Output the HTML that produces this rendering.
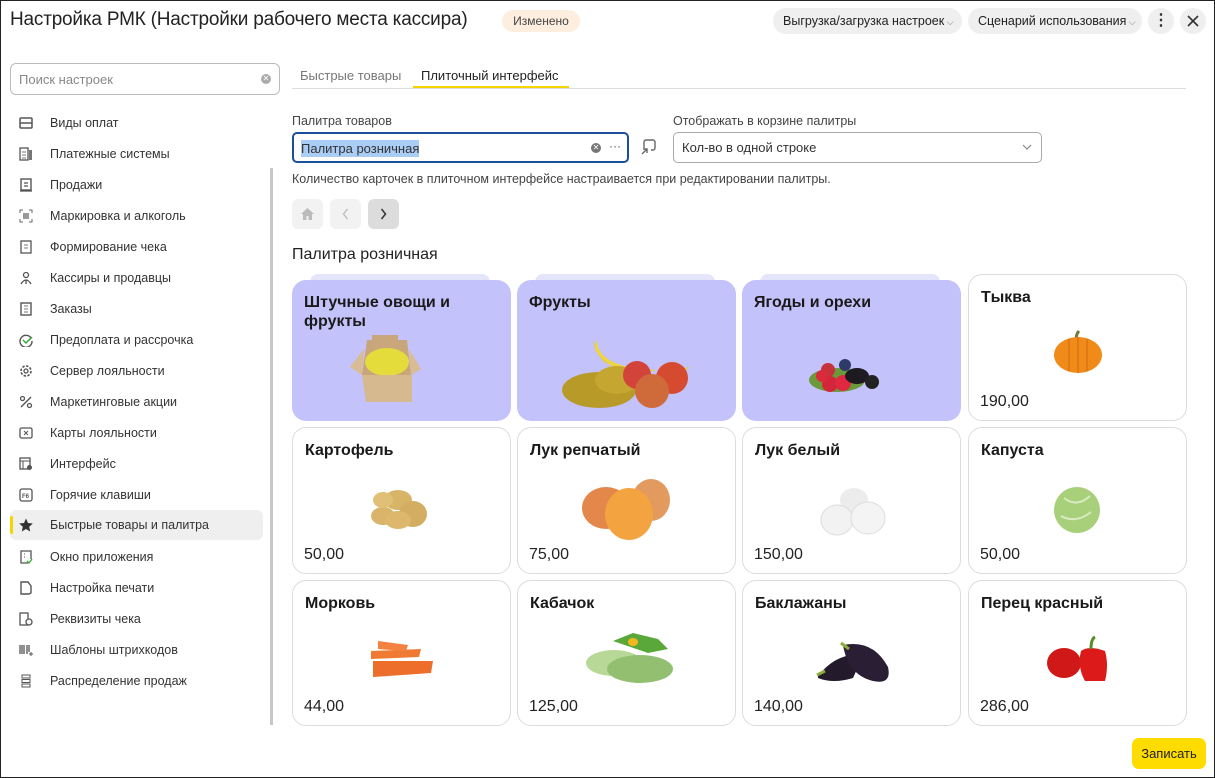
<!DOCTYPE html>
<html><head><meta charset="utf-8">
<style>
*{box-sizing:border-box;margin:0;padding:0}
body{width:1215px;height:778px;overflow:hidden;background:#fff;font-family:"Liberation Sans",Arial,sans-serif;color:#333;position:relative}
.frame{position:absolute;left:0;top:0;width:1215px;height:778px;border:1px solid #222;pointer-events:none;z-index:10}
.a{position:absolute}
.title{left:10px;top:9px;font-size:19px;letter-spacing:-0.2px;color:#222;white-space:nowrap}
.badge{left:502px;top:10px;width:78px;height:22px;border-radius:11px;background:#fdeee0;font-size:12px;color:#444;text-align:center;line-height:22px}
.pill{top:8px;height:26px;border-radius:13px;background:#efefef;font-size:12.5px;color:#222;line-height:26px;padding-left:10px;white-space:nowrap}
.circ{top:8px;width:26px;height:26px;border-radius:13px;background:#efefef;text-align:center;line-height:26px;font-size:16px;color:#333}
.search{left:10px;top:63px;width:270px;height:32px;border:1px solid #bbb;border-radius:6px;font-size:13px;color:#888;padding:8px 0 0 8px}
.clr{width:10px;height:10px;border-radius:5px;background:#aaa;color:#fff;font-size:8px;line-height:10px;text-align:center}
.nav{left:10px;width:253px;height:30px;font-size:12.5px;color:#333;line-height:30px;padding-left:40px}
.nav svg{position:absolute;left:9px;top:8px}
.sel{background:#efefef;border-radius:6px}
.tab{top:68px;font-size:13px}
.lbl{font-size:12.5px;color:#444}
.box{border:1px solid #aaa;border-radius:5px;height:31px;font-size:13px;color:#333;line-height:29px;padding-left:8px}
.sq{top:199px;width:31px;height:30px;border-radius:6px;background:#f2f2f2}
.card{width:219px;border-radius:14px;border:1px solid #dcdcdc;background:#fff;overflow:hidden}
.card.f{background:#c4c2fa;border:none}
.card .n{position:absolute;left:12px;top:13px;font-size:16px;font-weight:bold;color:#1a1a1a;line-height:19px}
.card .p{position:absolute;left:11px;bottom:9px;font-size:16px;color:#222}
.card svg{position:absolute;left:0;top:0}
.ftab{height:10px;width:180px;border-radius:8px 8px 0 0;background:#e4e4fb}
</style></head><body>
<div class="frame"></div>
<div class="a title">Настройка РМК (Настройки рабочего места кассира)</div>
<div class="a badge">Изменено</div>
<div class="a pill" style="left:773px;width:189px">Выгрузка/загрузка настроек<span style="font-size:9px;color:#777"> ⌵</span></div>
<div class="a pill" style="left:968px;width:174px">Сценарий использования<span style="font-size:9px;color:#777"> ⌵</span></div>
<div class="a circ" style="left:1148px;font-weight:bold">⋮</div>
<div class="a circ" style="left:1180px"><svg width="12" height="12" viewBox="0 0 12 12" style="margin-top:7px"><path d="M1 1L11 11M11 1L1 11" stroke="#333" stroke-width="1.6"/></svg></div>

<div class="a search">Поиск настроек</div>
<div class="a clr" style="left:261px;top:74px">✕</div>

<div class="a" style="left:270px;top:168px;width:3px;height:557px;background:#c8c8c8"></div>

<div class="a nav" style="top:108px"><svg width="14" height="14"><rect x="1" y="2" width="12" height="10" rx="1" fill="none" stroke="#555" stroke-width="1.5"/><path d="M1 7h12" stroke="#555" stroke-width="1.5"/></svg>Виды оплат</div>
<div class="a nav" style="top:139px"><svg width="14" height="14"><rect x="1" y="1" width="8" height="12" fill="none" stroke="#555" stroke-width="1.3"/><rect x="10" y="3" width="3" height="10" fill="#777"/><path d="M3 5h4M3 8h4M3 11h4" stroke="#777"/></svg>Платежные системы</div>
<div class="a nav" style="top:170px"><svg width="14" height="14"><rect x="2" y="1" width="10" height="11" fill="none" stroke="#555" stroke-width="1.4"/><path d="M1 13h12M5 5h4M5 8h4" stroke="#555" stroke-width="1.3"/></svg>Продажи</div>
<div class="a nav" style="top:201px"><svg width="14" height="14"><path d="M1 4V1h3M10 1h3v3M13 10v3h-3M4 13H1v-3" fill="none" stroke="#666"/><rect x="4" y="4" width="6" height="6" fill="#999"/></svg>Маркировка и алкоголь</div>
<div class="a nav" style="top:232px"><svg width="14" height="14"><rect x="2" y="1" width="10" height="12" fill="none" stroke="#555" stroke-width="1.3"/><path d="M5 5h4M5 8h4" stroke="#777"/></svg>Формирование чека</div>
<div class="a nav" style="top:263px"><svg width="14" height="14"><circle cx="7" cy="4" r="2.5" fill="none" stroke="#555" stroke-width="1.3"/><path d="M2 13Q7 5 12 13M7 9v4" fill="none" stroke="#555" stroke-width="1.3"/></svg>Кассиры и продавцы</div>
<div class="a nav" style="top:294px"><svg width="14" height="14"><rect x="2" y="1" width="10" height="12" fill="none" stroke="#555" stroke-width="1.4"/><path d="M5 4h4M5 7h4M5 10h4" stroke="#777"/></svg>Заказы</div>
<div class="a nav" style="top:325px"><svg width="14" height="14"><path d="M12 5A6 6 0 1 0 13 8" fill="none" stroke="#555" stroke-width="1.4"/><path d="M4 7l3 3 6-6" fill="none" stroke="#3a3" stroke-width="1.5"/></svg>Предоплата и рассрочка</div>
<div class="a nav" style="top:356px"><svg width="14" height="14"><circle cx="7" cy="7" r="5" fill="none" stroke="#555" stroke-width="1.6" stroke-dasharray="2.5 1.4"/><circle cx="7" cy="7" r="2" fill="none" stroke="#555" stroke-width="1.3"/></svg>Сервер лояльности</div>
<div class="a nav" style="top:387px"><svg width="14" height="14"><circle cx="3.5" cy="3.5" r="2" fill="none" stroke="#555" stroke-width="1.3"/><circle cx="10.5" cy="10.5" r="2" fill="none" stroke="#555" stroke-width="1.3"/><path d="M12 2L2 12" stroke="#555" stroke-width="1.4"/></svg>Маркетинговые акции</div>
<div class="a nav" style="top:418px"><svg width="14" height="14"><rect x="1" y="2" width="12" height="10" rx="1.5" fill="none" stroke="#555" stroke-width="1.3"/><path d="M5 5l4 4M9 5l-4 4" stroke="#555"/></svg>Карты лояльности</div>
<div class="a nav" style="top:449px"><svg width="14" height="14"><rect x="1" y="1" width="10" height="11" fill="none" stroke="#555" stroke-width="1.3"/><path d="M1 4h10M4 4v8" stroke="#555"/><circle cx="10.5" cy="10.5" r="2.5" fill="#555"/></svg>Интерфейс</div>
<div class="a nav" style="top:480px"><svg width="14" height="14"><rect x="1" y="1" width="12" height="12" rx="2" fill="none" stroke="#555" stroke-width="1.3"/><text x="3" y="10" font-size="6" font-family="Liberation Sans" font-weight="bold" fill="#555">F6</text></svg>Горячие клавиши</div>
<div class="a nav sel" style="top:510px"><svg width="14" height="14"><path d="M7 0.5l2 4.5 4.8.5-3.6 3.2 1 4.8L7 11 2.8 13.5l1-4.8L0.2 5.5 5 5z" fill="#333"/></svg>Быстрые товары и палитра</div>
<div class="a" style="left:10px;top:516px;width:3px;height:18px;background:#f5d400;border-radius:2px"></div>
<div class="a nav" style="top:542px"><svg width="14" height="14"><path d="M9 13H2V1h10v8" fill="none" stroke="#555" stroke-width="1.3"/><path d="M5 4h1M5 7h1" stroke="#555"/><path d="M8 11l2 2 3-4" fill="none" stroke="#3a3" stroke-width="1.3"/></svg>Окно приложения</div>
<div class="a nav" style="top:573px"><svg width="14" height="14"><path d="M2 1h7l3 4v7l-2 1H2z" fill="none" stroke="#555" stroke-width="1.4"/></svg>Настройка печати</div>
<div class="a nav" style="top:604px"><svg width="14" height="14"><rect x="1" y="1" width="8" height="12" fill="none" stroke="#555" stroke-width="1.3"/><circle cx="10" cy="10" r="3" fill="#fff" stroke="#555" stroke-width="1.3"/></svg>Реквизиты чека</div>
<div class="a nav" style="top:635px"><svg width="14" height="14"><path d="M1 2v9M3 2v9M5 2v9M8 2v9M10 2v7" stroke="#555" stroke-width="1.3"/><path d="M12 9v4M10 11h4" stroke="#555"/></svg>Шаблоны штрихкодов</div>
<div class="a nav" style="top:666px"><svg width="14" height="14"><rect x="3" y="1" width="8" height="3" fill="none" stroke="#555"/><rect x="3" y="5.5" width="8" height="3" fill="none" stroke="#555"/><rect x="3" y="10" width="8" height="3" fill="none" stroke="#555"/></svg>Распределение продаж</div>

<div class="a tab" style="left:300px;color:#777">Быстрые товары</div>
<div class="a tab" style="left:421px;color:#222">Плиточный интерфейс</div>
<div class="a" style="left:292px;top:88px;width:894px;height:1px;background:#ddd"></div>
<div class="a" style="left:413px;top:86px;width:156px;height:2px;background:#f5d400"></div>

<div class="a lbl" style="left:292px;top:114px">Палитра товаров</div>
<div class="a box" style="left:292px;top:132px;width:337px;border:2px solid #1b4f9a;padding-left:7px"><span style="background:#a9cdf5;padding:1px 0">Палитра розничная</span></div>
<div class="a clr" style="left:591px;top:143px;background:#777">✕</div>
<div class="a" style="left:609px;top:139px;font-size:12px;color:#555">···</div>
<svg class="a" style="left:640px;top:139px" width="16" height="17"><path d="M4 9V3a2 2 0 0 1 2-2h7a2 2 0 0 1 2 2v6a2 2 0 0 1-2 2h-2" fill="none" stroke="#666" stroke-width="1.4"/><path d="M2 15l5-5M3 10h4v4" fill="none" stroke="#666" stroke-width="1.4"/></svg>
<div class="a lbl" style="left:673px;top:114px">Отображать в корзине палитры</div>
<div class="a box" style="left:673px;top:132px;width:369px">Кол-во в одной строке</div>
<svg class="a" style="left:1022px;top:144px" width="10" height="7"><path d="M1 1l4 4 4-4" fill="none" stroke="#888" stroke-width="1.2"/></svg>
<div class="a lbl" style="left:292px;top:172px;color:#444">Количество карточек в плиточном интерфейсе настраивается при редактировании палитры.</div>
<div class="a sq" style="left:292px"><svg width="31" height="30"><path d="M9 15l6.5-6 6.5 6h-2v6h-3.5v-4h-2v4H11v-6z" fill="#bbb"/></svg></div>
<div class="a sq" style="left:330px"><svg width="31" height="30"><path d="M17.5 10l-4 5 4 5" fill="none" stroke="#bbb" stroke-width="1.3"/></svg></div>
<div class="a sq" style="left:368px;background:#dcdcdc"><svg width="31" height="30"><path d="M13.5 10l4 5-4 5" fill="none" stroke="#333" stroke-width="1.5"/></svg></div>
<div class="a" style="left:292px;top:246px;font-size:16px;color:#222">Палитра розничная</div>

<div class="a ftab" style="left:310px;top:274px"></div>
<div class="a ftab" style="left:535px;top:274px"></div>
<div class="a ftab" style="left:760px;top:274px"></div>

<div class="a card f" style="left:292px;top:280px;height:141px"><div class="n">Штучные овощи и<br>фрукты</div>
<svg width="219" height="141"><path d="M70 95l5-35h40l4 35z" fill="#c9a57a"/><path d="M70 95l-12-8 14-18z" fill="#d9bb94"/><path d="M119 95l10-6-12-20z" fill="#d9bb94"/><path d="M80 55h26v18H80z" fill="#caa67d"/><ellipse cx="95" cy="82" rx="22" ry="14" fill="#e4dc3a"/><path d="M70 95h50v27H74z" fill="#d6b98f"/></svg></div>
<div class="a card f" style="left:517px;top:280px;height:141px"><div class="n">Фрукты</div>
<svg width="219" height="141"><path d="M76 60q8 40 70 38l27-12q-30 30-76 10z" fill="#e8cc2a"/><path d="M80 58q-2 30 60 32q-40 10-62-20z" fill="#f0d735"/><ellipse cx="82" cy="110" rx="37" ry="18" fill="#b89a28"/><ellipse cx="100" cy="100" rx="22" ry="14" fill="#c4a630"/><circle cx="120" cy="95" r="14" fill="#d2443a"/><circle cx="155" cy="98" r="16" fill="#d64a30"/><circle cx="135" cy="111" r="17" fill="#cf6a3a"/></svg></div>
<div class="a card f" style="left:742px;top:280px;height:141px"><div class="n">Ягоды и орехи</div>
<svg width="219" height="141"><ellipse cx="95" cy="100" rx="28" ry="12" fill="#6a9a3a"/><circle cx="86" cy="90" r="7" fill="#c7323a"/><circle cx="103" cy="85" r="6" fill="#2e3a68"/><circle cx="88" cy="104" r="8" fill="#d4263a"/><circle cx="101" cy="103" r="8" fill="#e02840"/><ellipse cx="115" cy="96" rx="12" ry="8" fill="#1d1a22"/><circle cx="130" cy="102" r="7" fill="#222"/><circle cx="80" cy="96" r="6" fill="#d92b3b"/></svg></div>
<div class="a card" style="left:968px;top:274px;height:147px"><div class="n">Тыква</div>
<svg width="219" height="147"><path d="M108 68q-2-8 2-12" stroke="#6d7a3a" stroke-width="3" fill="none"/><ellipse cx="109" cy="80" rx="24" ry="18" fill="#f08a18"/><path d="M100 64v32M118 64v32M109 62v36" stroke="#d36a10" stroke-width="1"/></svg><div class="p">190,00</div></div>

<div class="a card" style="left:292px;top:427px;height:147px"><div class="n">Картофель</div>
<svg width="219" height="147"><ellipse cx="90" cy="88" rx="12" ry="9" fill="#d9b56a"/><ellipse cx="105" cy="72" rx="14" ry="10" fill="#d8b468"/><ellipse cx="90" cy="72" rx="10" ry="8" fill="#e0bf76"/><ellipse cx="120" cy="86" rx="14" ry="13" fill="#d2ad62"/><ellipse cx="105" cy="92" rx="13" ry="9" fill="#ddb86c"/></svg><div class="p">50,00</div></div>
<div class="a card" style="left:517px;top:427px;height:147px"><div class="n">Лук репчатый</div>
<svg width="219" height="147"><ellipse cx="88" cy="80" rx="24" ry="21" fill="#e3874a"/><ellipse cx="133" cy="72" rx="19" ry="21" fill="#e39a5e"/><ellipse cx="111" cy="86" rx="24" ry="26" fill="#f3a340"/></svg><div class="p">75,00</div></div>
<div class="a card" style="left:742px;top:427px;height:147px"><div class="n">Лук белый</div>
<svg width="219" height="147"><ellipse cx="111" cy="72" rx="14" ry="12" fill="#ececec"/><ellipse cx="94" cy="92" rx="16" ry="15" fill="#f2f2f2" stroke="#ddd"/><ellipse cx="125" cy="90" rx="17" ry="16" fill="#f4f4f4" stroke="#ddd"/></svg><div class="p">150,00</div></div>
<div class="a card" style="left:968px;top:427px;height:147px"><div class="n">Капуста</div>
<svg width="219" height="147"><circle cx="108" cy="82" r="23" fill="#a8d07a"/><path d="M95 70q13 10 26-2M92 88q15 8 30-4" stroke="#d6ecc0" fill="none" stroke-width="2"/></svg><div class="p">50,00</div></div>

<div class="a card" style="left:292px;top:580px;height:146px"><div class="n">Морковь</div>
<svg width="219" height="146"><path d="M78 70l50-2-2 8-48 2z" fill="#f07a34"/><path d="M80 80l60 0-2 12-58 4z" fill="#ec6e2a"/><path d="M85 60l30 4-2 6-28-2z" fill="#f38240"/></svg><div class="p">44,00</div></div>
<div class="a card" style="left:517px;top:580px;height:146px"><div class="n">Кабачок</div>
<svg width="219" height="146"><path d="M95 60l20-8 25 6 10 10-20 4z" fill="#5aa83a"/><ellipse cx="115" cy="61" rx="5" ry="4" fill="#f2b820"/><ellipse cx="96" cy="82" rx="28" ry="13" fill="#b8d898"/><ellipse cx="122" cy="88" rx="33" ry="14" fill="#93c070"/></svg><div class="p">125,00</div></div>
<div class="a card" style="left:742px;top:580px;height:146px"><div class="n">Баклажаны</div>
<svg width="219" height="146"><path d="M75 95q20-25 45-20l-10 22q-20 6-35 0z" fill="#231a2c"/><path d="M100 64q30-6 45 22q4 18-15 14q-25-6-30-36z" fill="#2a1e34"/><path d="M98 62l8 6M74 94l8-4" stroke="#8aac3a" stroke-width="3"/></svg><div class="p">140,00</div></div>
<div class="a card" style="left:968px;top:580px;height:146px"><div class="n">Перец красный</div>
<svg width="219" height="146"><ellipse cx="95" cy="82" rx="17" ry="15" fill="#d01818"/><path d="M112 70q8-6 24 0q4 14 0 30h-20q-8-14-4-30z" fill="#dd1a1a"/><path d="M122 68q0-10 4-12" stroke="#5a8a2a" stroke-width="3" fill="none"/></svg><div class="p">286,00</div></div>

<div class="a" style="left:1132px;top:738px;width:74px;height:31px;border-radius:7px;background:#fedc00;font-size:13px;color:#222;text-align:center;line-height:31px">Записать</div>
</body></html>
